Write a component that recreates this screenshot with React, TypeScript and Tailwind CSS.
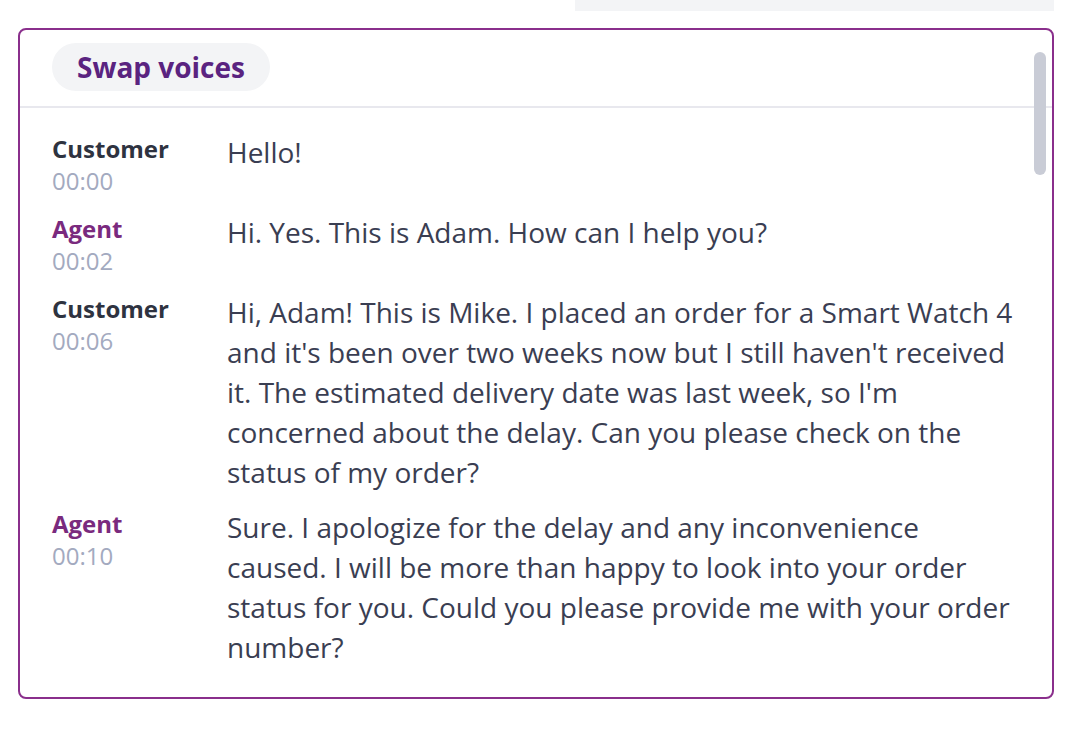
import React from "react";

type Line = {
  speaker: "Customer" | "Agent";
  time: string;
  text: string;
};

const lines: Line[] = [
  { speaker: "Customer", time: "00:00", text: "Hello!" },
  { speaker: "Agent", time: "00:02", text: "Hi. Yes. This is Adam. How can I help you?" },
  {
    speaker: "Customer",
    time: "00:06",
    text: "Hi, Adam! This is Mike. I placed an order for a Smart Watch 4 and it's been over two weeks now but I still haven't received it. The estimated delivery date was last week, so I'm concerned about the delay. Can you please check on the status of my order?",
  },
  {
    speaker: "Agent",
    time: "00:10",
    text: "Sure. I apologize for the delay and any inconvenience caused. I will be more than happy to look into your order status for you. Could you please provide me with your order number?",
  },
];

export default function App() {
  return (
    <div
      className="w-[1080px] h-[730px] bg-white overflow-hidden"
      style={{ fontFamily: '"Open Sans", "Noto Sans", sans-serif' }}
    >
      <div className="flex justify-end pr-[26px]">
        <div className="w-[479px] h-[11px] bg-[#f3f4f6]" />
      </div>

      <div className="ml-[18px] mt-[17px] w-[1036px] h-[671px] relative border-2 border-[#8a2f8c] rounded-[8px] overflow-hidden flex flex-col">
        <div className="h-[78px] shrink-0 flex items-center px-[32px] border-b-2 border-[#e8e8ee]">
          <div className="h-[48px] px-[25px] flex items-center rounded-full bg-[#f3f4f6] text-[28px] font-bold text-[#5a2380] -mt-[2px]">
            Swap voices
          </div>
        </div>

        {/* transcript */}
        <div className="flex-1 overflow-hidden">
          <div className="pt-[25px] pl-[32px] pr-[34px] flex flex-col gap-[16px]">
            {lines.map((l, i) => (
              <div key={i} className="flex">
                <div className="w-[175px] shrink-0 leading-[32px] text-[24px]">
                  <div
                    className={
                      l.speaker === "Agent"
                        ? "font-bold text-[#7a2a7e]"
                        : "font-bold text-[#2e3340]"
                    }
                  >
                    {l.speaker}
                  </div>
                  <div className="text-[#a3aabf]">{l.time}</div>
                </div>
                <p className="flex-1 text-[28px] leading-[40px] text-[#3a3e52] -mt-[1px]">
                  {l.text}
                </p>
              </div>
            ))}
          </div>
        </div>

        <div className="absolute right-[6px] top-[22px] w-[12px] h-[123px] rounded-full bg-[#c9ccd6]" />
      </div>
    </div>
  );
}
